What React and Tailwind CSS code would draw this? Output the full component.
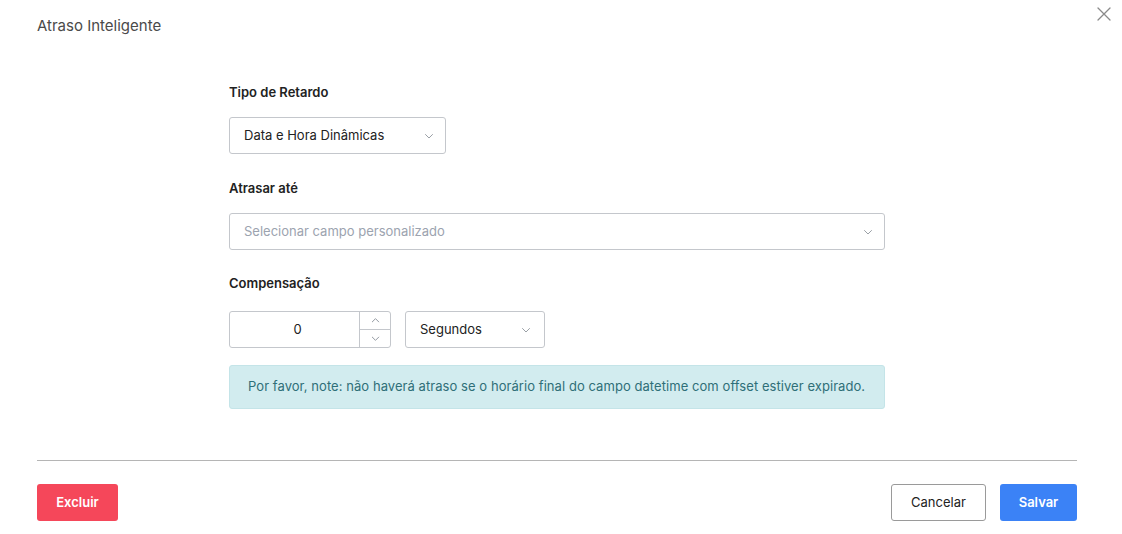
import { useState } from 'react'

function Chevron({ up = false, className = '' }) {
  return (
    <svg viewBox="0 0 12 12" className={className} fill="none" stroke="currentColor" strokeWidth="1" strokeLinecap="round" strokeLinejoin="round">
      {up ? <path d="M2.5 7.5 6 4l3.5 3.5" /> : <path d="M2.5 4.5 6 8l3.5-3.5" />}
    </svg>
  )
}

function Select({ value, placeholder, className = '' }) {
  return (
    <div className={`flex items-center justify-between h-[37px] pl-[14px] pr-[10px] border border-[#c4c7cc] rounded-[3px] bg-white ${className}`}>
      <span className={value ? 'text-[#222]' : 'text-[#9ca3af]'}>{value || placeholder}</span>
      <Chevron className="w-[12px] h-[12px] text-[#9aa0a6]" />
    </div>
  )
}

export default function App() {
  const [offset] = useState(0)

  return (
    <div className="relative w-[1122px] h-[534px] bg-white text-[13px] font-['Inter',sans-serif]">
      {/* header */}
      <div className="flex items-start justify-between pl-[37px] pr-[10px] pt-[16px]">
        <h1 className="text-[15px] leading-5 text-[#4a4a4a]">Atraso Inteligente</h1>
        <button className="-mt-[10px] text-[#8a8a8a]">
          <svg viewBox="0 0 16 16" className="w-[16px] h-[16px]" stroke="currentColor" strokeWidth="1.3" strokeLinecap="round">
            <path d="M2 2l12 12M14 2 2 14" />
          </svg>
        </button>
      </div>

      {/* form */}
      <div className="ml-[229px] w-[656px] mt-[46px] flex flex-col">
        <label className="leading-5 font-semibold text-[#222]">Tipo de Retardo</label>
        <Select value="Data e Hora Dinâmicas" className="mt-[15px] w-[217px] h-[36px]" />

        <label className="mt-[24px] leading-5 font-semibold text-[#222]">Atrasar até</label>
        <Select placeholder="Selecionar campo personalizado" className="mt-[15px] w-[656px] h-[37px]" />

        <label className="mt-[23px] leading-5 font-semibold text-[#222]">Compensação</label>
        <div className="mt-[18px] flex gap-[14px]">
          <div className="flex w-[162px] h-[37px] border border-[#c4c7cc] rounded-[3px]">
            <div className="flex-1 flex items-center justify-center pl-[6px] text-[#222]">{offset}</div>
            <div className="w-[31px] flex flex-col border-l border-[#c4c7cc]">
              <div className="flex-1 flex items-center justify-center border-b border-[#c4c7cc]">
                <Chevron up className="w-[11px] h-[11px] text-[#8a9099]" />
              </div>
              <div className="flex-1 flex items-center justify-center">
                <Chevron className="w-[11px] h-[11px] text-[#8a9099]" />
              </div>
            </div>
          </div>
          <Select value="Segundos" className="w-[140px] pl-[14px] pr-[12px]" />
        </div>

        <div className="mt-[17px] h-[44px] flex items-center px-[18px] bg-[#d2ecef] border border-[#c4e4e8] rounded-[3px] text-[#2f6f78] tracking-[0.06px]">
          Por favor, note: não haverá atraso se o horário final do campo datetime com offset estiver expirado.
        </div>
      </div>

      {/* footer */}
      <div className="mx-[37px] w-[1040px] mt-[51px] border-t border-[#b5b5b5]" />
      <div className="flex justify-between px-[37px] w-[1114px] mt-[23px]">
        <button className="w-[81px] h-[37px] rounded-[3px] bg-[#f5475a] text-white font-semibold">Excluir</button>
        <div className="flex gap-[14px]">
          <button className="w-[95px] h-[37px] rounded-[3px] border border-[#9a9a9a] text-[#222]">Cancelar</button>
          <button className="w-[77px] h-[37px] rounded-[3px] bg-[#3b82f6] text-white font-semibold">Salvar</button>
        </div>
      </div>
    </div>
  )
}
